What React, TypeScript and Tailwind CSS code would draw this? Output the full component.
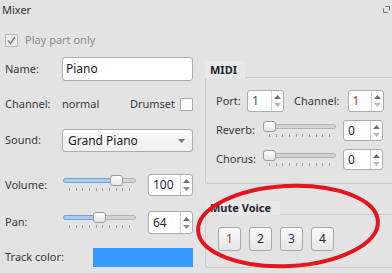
import React, { FC } from 'react'

const Arrows: FC<{ downOff?: boolean }> = ({ downOff }) => (
  <div className="w-[12px] border-l border-[#d6d6d6] flex flex-col items-center justify-center gap-[4px]">
    <svg width="7" height="4" viewBox="0 0 7 4"><path d="M0 4 L3.5 0 L7 4 Z" fill="#6f6f6f" /></svg>
    <svg width="7" height="4" viewBox="0 0 7 4"><path d="M0 0 L3.5 4 L7 0 Z" fill={downOff ? '#b9b9b9' : '#8a8a8a'} /></svg>
  </div>
)

const SpinBox: FC<{ value: string; className: string; color?: string; downOff?: boolean }> = ({ value, className, color = '#1e2638', downOff }) => (
  <div className={`flex border border-[#acacac] rounded-[3px] bg-white ${className}`}>
    <div className="flex-1 flex items-center pl-[4px] text-[12px]" style={{ color }}>{value}</div>
    <Arrows downOff={downOff} />
  </div>
)

const Slider: FC<{ value: number }> = ({ value }) => {
  const left = Math.round((value / 127) * 60)
  return (
    <div className="relative w-[73px] h-[17px] self-start mt-[1px] shrink-0">
      <div className="absolute left-0 right-0 top-[3px] h-[5px] rounded-full bg-[#d2d2d2] border border-[#b2b2b2]" />
      {left > 0 && (
        <div
          className="absolute left-0 top-[3px] h-[5px] rounded-l-full bg-[#a9cdf1] border border-[#74a3d8]"
          style={{ width: left + 4 }}
        />
      )}
      <div
        className="absolute top-0 w-[13px] h-[11px] rounded-[3px] border border-[#9c9c9c] bg-gradient-to-b from-white to-[#e4e4e4]"
        style={{ left }}
      />
      <div className="absolute left-[6px] right-[6px] top-[13px] flex justify-between">
        {Array.from({ length: 10 }).map((_, i) => (
          <span key={i} className="w-px h-[3px] bg-[#9d9d9d]" />
        ))}
      </div>
    </div>
  )
}

const CheckBox: FC<{ checked?: boolean; disabled?: boolean }> = ({ checked, disabled }) => (
  <div className={`w-[13px] h-[13px] border rounded-[1px] flex items-center justify-center ${disabled ? 'border-[#b8b8b8] bg-[#ececec]' : 'border-[#a9a9a9] bg-white'}`}>
    {checked && (
      <svg width="9" height="9" viewBox="0 0 9 9">
        <path d="M1 4.5 L3.5 7.5 L8 1" fill="none" stroke="#7d7d7d" strokeWidth="1.4" />
      </svg>
    )}
  </div>
)

const VoiceButton: FC<{ n: string; color: string }> = ({ n, color }) => (
  <button className="w-[23px] h-[24px] rounded-[3px] border border-[#a9a9a9] bg-gradient-to-b from-[#fafafa] to-[#e5e5e5] text-[12px] flex items-center justify-center" style={{ color }}>
    {n}
  </button>
)

const App: FC = () => {
  return (
    <div className="relative w-[392px] h-[273px] overflow-hidden bg-[#e3e3e3] text-[11px] text-[#3a3a3a]" style={{ fontFamily: '"Noto Sans", "Open Sans", sans-serif' }}>
      <div className="h-[20px] flex items-center justify-between pl-[2px] pr-[2px]">
        <span className="text-[#333]">Mixer</span>
        <svg width="7" height="7" viewBox="0 0 7 7" className="mb-[2px]">
          <path d="M2.5 0.5 H6.5 V4.5" fill="none" stroke="#707070" strokeWidth="1" />
          <path d="M0.5 2.5 V6.5 H4.5" fill="none" stroke="#707070" strokeWidth="1" />
        </svg>
      </div>

      <div className="flex pl-[5px]">
        {/* left column */}
        <div className="w-[188px] flex flex-col">
          <div className="mt-[14px] h-[13px] flex items-center">
            <CheckBox checked disabled />
            <span className="ml-[7px] text-[#8b8b8b]">Play part only</span>
          </div>

          <div className="mt-[10px] h-[24px] flex items-center">
            <span className="w-[57px]">Name:</span>
            <div className="flex-1 h-full flex items-center bg-white border border-[#acacac] rounded-[3px] pl-[3px] text-[12px] text-[#1e1e1e]">
              Piano
            </div>
          </div>

          <div className="mt-[16px] h-[14px] flex items-center">
            <span className="w-[57px]">Channel:</span>
            <span>normal</span>
            <span className="ml-auto">Drumset</span>
            <div className="ml-[5px]"><CheckBox /></div>
          </div>

          <div className="mt-[18px] h-[23px] flex items-center">
            <span className="w-[57px]">Sound:</span>
            <div className="flex-1 h-full flex items-center justify-between border border-[#acacac] rounded-[3px] bg-gradient-to-b from-[#fbfbfb] to-[#efefef] pl-[5px] pr-[7px] text-[12px] text-[#1e1e1e]">
              <span>Grand Piano</span>
              <svg width="7" height="4" viewBox="0 0 7 4"><path d="M0 0 L3.5 4 L7 0 Z" fill="#777" /></svg>
            </div>
          </div>

          <div className="mt-[22px] h-[22px] flex items-center">
            <span className="w-[58px]">Volume:</span>
            <Slider value={100} />
            <SpinBox value="100" className="ml-auto w-[45px] h-full" />
          </div>

          <div className="mt-[15px] h-[23px] flex items-center">
            <span className="w-[58px]">Pan:</span>
            <Slider value={64} />
            <SpinBox value="64" className="ml-auto w-[45px] h-full" />
          </div>

          <div className="mt-[14px] h-[19px] flex items-center">
            <span className="w-[88px]">Track color:</span>
            <div className="flex-1 h-full bg-[#3399ff]" />
          </div>
        </div>

        {/* right column */}
        <div className="ml-[12px] flex-1 flex flex-col">
          <div className="mt-[41px] flex">
            <div className="w-[40px] h-[17px] pl-[5px] bg-[#e8e8e8] font-bold text-[#1f2433] leading-[17px]">MIDI</div>
            <div className="flex-1 border-b border-[#cbcbcb]" />
          </div>
          <div className="h-[106px] border-l border-b border-[#cbcbcb] rounded-bl-[3px] pl-[10px] flex flex-col">
            <div className="mt-[12px] h-[22px] flex items-center">
              <span className="w-[31px]">Port:</span>
              <SpinBox value="1" color="#2c4f9c" downOff className="w-[37px] h-full" />
              <span className="ml-[10px]">Channel:</span>
              <SpinBox value="1" color="#a83a2e" downOff className="ml-[8px] w-[36px] h-full" />
            </div>
            <div className="mt-[8px] h-[21px] flex items-center">
              <span className="w-[47px]">Reverb:</span>
              <Slider value={0} />
              <SpinBox value="0" downOff className="ml-[7px] w-[40px] h-full" />
            </div>
            <div className="mt-[8px] h-[21px] flex items-center">
              <span className="w-[47px]">Chorus:</span>
              <Slider value={0} />
              <SpinBox value="0" downOff className="ml-[7px] w-[40px] h-full" />
            </div>
          </div>

          <div className="mt-[17px] flex">
            <div className="w-[75px] h-[14px] pl-[5px] bg-[#e8e8e8] font-bold text-[#1f2433] leading-[14px]">Mute Voice</div>
            <div className="flex-1 border-b border-[#cbcbcb]" />
          </div>
          <div className="h-[53px] border-l border-b border-[#cbcbcb] rounded-bl-[3px] pl-[12px] pt-[12px] flex gap-[8px]">
            <VoiceButton n="1" color="#a33a30" />
            <VoiceButton n="2" color="#2a2a2a" />
            <VoiceButton n="3" color="#243a6a" />
            <VoiceButton n="4" color="#2a2a2a" />
          </div>
        </div>
      </div>

      <svg className="absolute inset-0 pointer-events-none" width="392" height="273" viewBox="0 0 392 273">
        <ellipse cx="288" cy="226" rx="90" ry="40" fill="none" stroke="#e3151e" strokeWidth="4" transform="rotate(-3 288 226)" />
      </svg>
    </div>
  )
}

export default App
